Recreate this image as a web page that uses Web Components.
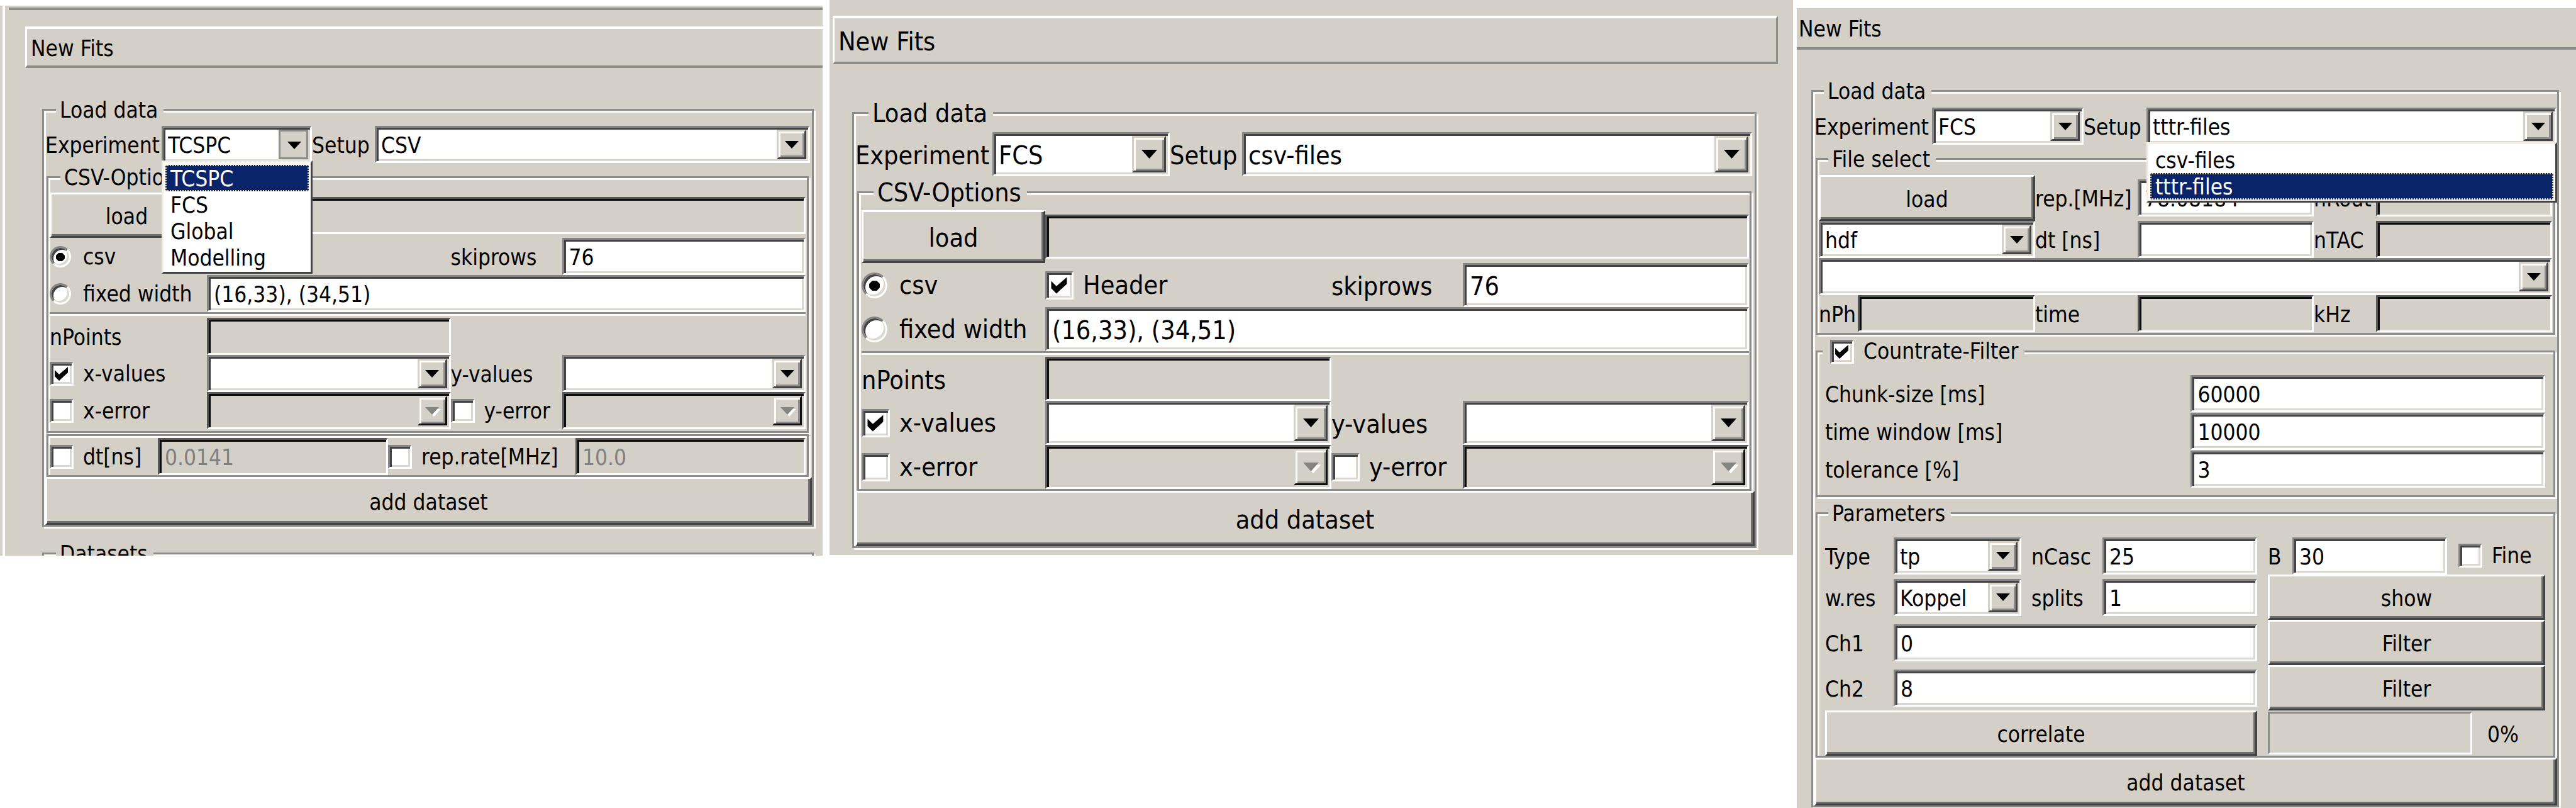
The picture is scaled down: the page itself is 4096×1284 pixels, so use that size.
<!DOCTYPE html>
<html lang="en">
<head>
<meta charset="utf-8">
<title>New Fits</title>
<style>
  body { margin: 0; background: #fff; }
  .desk { display: flex; align-items: flex-start; }
  tcspc-window { flex: 1308 1 0; margin-top: 9px; }
  fcs-csv-window { flex: 1532 1 0; margin-left: 11px; }
  fcs-tttr-window { flex: 1239 1 0; margin: 9px 0 0 6px; }
</style>
</head>
<body>
<main class="desk">
  <tcspc-window></tcspc-window>
  <fcs-csv-window></fcs-csv-window>
  <fcs-tttr-window></fcs-tttr-window>
</main>
<script>
const base = `
  *, *::before, *::after { box-sizing: border-box; }
  input, select, button { font: inherit; color: inherit; margin: 0; border-radius: 0; outline: none; appearance: none; }
  label { white-space: pre; }
  .sunken {
    border: 3px solid; border-color: #858585 #fff #fff #858585; background: #fff;
    box-shadow: inset 3px 3px 0 #434343, inset -3px -3px 0 #dcd8cf;
  }
  .sunken:disabled {
    border-color: #585858 #fff #fff #585858; background: var(--face); color: #808080; opacity: 1;
    box-shadow: inset 3px 3px 0 #0c0c0c, inset -3px -3px 0 var(--face);
  }
`;
function define(name, html, setup) {
  const t = document.createElement('template');
  customElements.define(name, class extends HTMLElement {
    constructor() {
      super();
      t.innerHTML = t.innerHTML || '<style>' + base + '</style>' + html;
      this.attachShadow({ mode: 'open' }).append(t.content.cloneNode(true));
    }
    connectedCallback() { if (setup) setup(this, this.shadowRoot); }
  });
}

define('title-bar', `
  <style>
    :host { display: block; }
    h1 { margin: 0; height: var(--bar-h); padding: 4px 0 0 var(--bar-pad); display: flex; align-items: center;
      font-size: inherit; font-weight: 400; border: 0 solid #fff; border-width: 4px 0 4px 3px; border-bottom-color: #8c8c8a; }
    :host([closed]) h1 { border-right: 3px solid #8c8c8a; }
    :host([cut]) h1 { border-left: 0; }
  </style>
  <h1><slot></slot></h1>`);

define('group-box', `
  <style>
    :host { display: block; }
    fieldset { margin: 0; min-width: 0; padding: 0; border: 3px solid #8c8c8a;
      box-shadow: 3px 3px 0 #fbfaf7, inset 3px 3px 0 #fbfaf7; }
    .body { padding: var(--gp, 0); }
    legend { height: var(--legend-h); line-height: calc(var(--legend-h) + 2px); margin-left: var(--legend-m);
      padding: 0 9px 0 6px; background: var(--face); }
    :host([checkable]) legend { margin-left: 8px; padding-left: 12px; display: flex; align-items: center; }
    :host([plain]) legend { display: none; }
  </style>
  <fieldset><legend><slot name="legend"></slot></legend><div class="body"><slot></slot></div></fieldset>`);

define('push-button', `
  <style>
    :host { display: block; }
    button { display: block; width: 100%; height: 100%; padding: 4px 0 0; background: var(--face); text-align: center;
      border: 3px solid; border-color: #fff #434343 #434343 #fff; box-shadow: inset -3px -3px 0 #6e6e6c; }
  </style>
  <button type="button"><slot></slot></button>`);

define('text-field', `
  <style>
    :host { display: contents; }
    label { align-self: center; padding: 3px 0 0 var(--label-pad, 0); }
    input { width: 100%; min-width: 0; height: var(--field-h); padding: 3px 6px 0 8px; align-self: center; grid-column: var(--col, auto); }
  </style>
  <label for="f"></label><input id="f" type="text" class="sunken">`,
  (el, root) => {
    const label = root.querySelector('label'), input = root.querySelector('input');
    if (el.hasAttribute('label')) label.textContent = el.getAttribute('label');
    else { label.remove(); input.setAttribute('aria-label', el.getAttribute('name') || 'value'); }
    input.value = el.getAttribute('value') || '';
    input.disabled = el.hasAttribute('disabled');
  });

define('combo-field', `
  <style>
    :host { display: contents; }
    label { align-self: center; padding-top: 3px; }
    .combo { display: grid; position: relative; min-width: 0; height: var(--field-h); align-self: center; grid-column: var(--col, auto); }
    select { grid-area: 1 / 1; width: 100%; height: 100%; padding: 3px 60px 0 7px; }
    .drop { grid-area: 1 / 1; justify-self: end; margin: 6px; width: var(--drop-w); display: grid; place-items: center;
      pointer-events: none; background: var(--face); border: 3px solid; border-color: var(--face) #434343 #434343 var(--face);
      box-shadow: inset 3px 3px 0 #fbfaf7, inset -3px -3px 0 #8c8c8a; }
    svg { width: var(--arrow-w); height: var(--arrow-h); overflow: visible; }
    .lit { display: none; fill: #fff; }
    :host([disabled]) .lit { display: block; }
    :host([disabled]) .arrow { fill: #858580; }
    :host([disabled]) .drop { border-color: var(--face) #0c0c0c #0c0c0c var(--face); }
    :host([pressed]) .drop { border-color: #8c8c8a; box-shadow: none; padding: 3px 0 0 3px; }
    ul { display: none; position: absolute; z-index: 5; left: 0; right: -1px; top: calc(100% - 4px); margin: 0;
      padding: 4px 3px 2px; list-style: none; background: #fff; border: 3px solid; border-color: #f3efe6 #434343 #434343 #f3efe6; }
    :host([open]) ul { display: block; }
    li { height: var(--item-h); line-height: calc(var(--item-h) + 2px); padding-left: 8px; }
    li[aria-selected=true] { background: #0a246a; color: #fff; outline: 2px dotted #e8cf86; outline-offset: -2px; }
  </style>
  <label for="s"></label>
  <div class="combo">
    <select id="s" class="sunken"></select>
    <span class="drop"><svg viewBox="0 0 22 12" preserveAspectRatio="none" aria-hidden="true"><path class="lit" d="M3 3h22L14 15z"/><path class="arrow" d="M0 0h22L11 12z"/></svg></span>
    <ul role="listbox"></ul>
  </div>`,
  (el, root) => {
    const label = root.querySelector('label'), select = root.querySelector('select'), list = root.querySelector('ul');
    if (el.hasAttribute('label')) label.textContent = el.getAttribute('label');
    else { label.remove(); select.setAttribute('aria-label', el.getAttribute('name') || 'choice'); }
    const value = el.getAttribute('value') || '';
    (el.getAttribute('options') || value).split('|').forEach(text => {
      const option = new Option(text, text, false, text === value);
      select.add(option);
      if (el.hasAttribute('open')) {
        const li = document.createElement('li');
        li.textContent = text;
        li.setAttribute('role', 'option');
        li.setAttribute('aria-selected', text === value);
        list.append(li);
      }
    });
    if (!el.hasAttribute('open')) list.remove();
    select.disabled = el.hasAttribute('disabled');
  });

const tick = `
  <style>
    :host { display: block; align-self: center; }
    label { display: grid; grid-template-columns: var(--mark-col) auto; justify-content: start; align-items: center; }
    input { grid-area: 1 / 1; width: var(--mark); height: var(--mark); }
    input:not(:checked) + svg { visibility: hidden; }
    svg { grid-area: 1 / 1; width: var(--mark); height: var(--mark); pointer-events: none; }
    .round { width: var(--round); height: var(--round); border-radius: 50%; }
    .round + svg { width: var(--round); height: var(--round); }
  </style>`;
const sync = (el, root) => { root.querySelector('input').checked = el.hasAttribute('checked'); };
define('check-field', tick + `
  <label><input type="checkbox" class="sunken"><svg viewBox="0 0 38 38" aria-hidden="true"><path d="M8 13l7 7L29 8v9L15 30l-7-7z"/></svg><span><slot></slot></span></label>`, sync);
define('radio-field', tick + `
  <label><input type="radio" class="sunken round"><svg viewBox="0 0 34 34" aria-hidden="true"><path d="M14 11h6l4 4v5l-4 4h-6l-4-4v-5z"/></svg><span><slot></slot></span></label>`, sync);

define('work-progress', `
  <style>
    :host { display: flex; align-items: center; }
    .track { flex: 1; height: 68px; border: 3px solid; border-color: #8c8c8a #fff #fff #8c8c8a; }
    output { width: 116px; padding: 4px 0 0 24px; }
  </style>
  <div class="track" role="progressbar" aria-valuenow="0" aria-label="progress"></div><output><slot></slot></output>`);

const windowStyle = `
  <style>
    :host { display: block; min-width: 0; color: #000; background: #d4d0c8; --face: #d4d0c8;
      font: 35px "DejaVu Sans Condensed", "DejaVu Sans", sans-serif; font-stretch: condensed;
      --field-h: 59px; --legend-h: 41px; --legend-m: 19px; --bar-h: 66px; --bar-pad: 6px;
      --drop-w: 47px; --arrow-w: 22px; --arrow-h: 12px; --item-h: 42px;
      --mark: 38px; --mark-col: 53px; --round: 34px; }
    .grid { display: grid; align-items: center; }
    .line { height: 6px; background: linear-gradient(#8c8c8a 50%, #fbfaf7 50%); }
  </style>`;

const csvRows = (header) => `
  <div class="grid opts">
    <radio-field checked>csv</radio-field>
    ${header}
    <text-field label="skiprows" value="76"></text-field>
    <radio-field>fixed width</radio-field>
    <text-field name="fixed width columns" value="(16,33), (34,51)" style="--col: 2 / -1"></text-field>
  </div>
  <div class="line"></div>
  <div class="grid opts">
    <text-field label="nPoints" disabled></text-field><span></span><span></span>
    <check-field checked>x-values</check-field>
    <combo-field name="x-values"></combo-field>
    <combo-field label="y-values"></combo-field>
    <check-field>x-error</check-field>
    <combo-field name="x-error" disabled></combo-field>
    <check-field>y-error</check-field>
    <combo-field name="y-error" disabled></combo-field>
  </div>`;

define('tcspc-window', windowStyle + `
  <style>
    .frame { margin-left: 4px; border-left: 4px solid #fff; padding-top: 3px; }
    .edge { height: 4px; margin-left: 6px; background: #8c8c8a; }
    title-bar { margin: 26px 0 0 32px; }
    .main { margin: 46px 14px 0 59px; --gp: 5px 0 0 2px; }
    .source { grid-template-columns: 185px 239px 100px 1fr; margin-right: 3px; }
    .inner { margin: 2px 5px 0 2px; --gp: 4px 2px 3px 2px; }
    .rates { --gp: 3px 2px 0 2px; }
    .rates .grid { grid-template-columns: 172px 1fr 298px 1fr; }
    .load { display: grid; grid-template-columns: 245px 1fr; height: 72px; }
    .load push-button { height: 72px; }
    .opts { grid-template-columns: 250px 1fr 177px 1fr; }
    .line { margin-bottom: 3px; }
    .add { height: 76px; }
    .next { margin: 22px 11px 0 59px; padding-right: 3px; height: 24px; overflow: hidden; --gp: 40px 0 0; }
  </style>
  <div class="frame">
    <div class="edge"></div>
    <title-bar>New Fits</title-bar>
    <group-box class="main"><span slot="legend">Load data</span>
      <div class="grid source">
        <combo-field label="Experiment" value="TCSPC" options="TCSPC|FCS|Global|Modelling" open pressed></combo-field>
        <combo-field label="Setup" value="CSV"></combo-field>
      </div>
      <group-box class="inner"><span slot="legend">CSV-Options</span>
        <div class="load"><push-button>load</push-button><text-field name="file" disabled></text-field></div>
        ${csvRows('<span></span>')}
      </group-box>
      <group-box class="inner rates" plain>
        <div class="grid">
          <check-field>dt[ns]</check-field><text-field name="dt" value="0.0141" disabled></text-field>
          <check-field>rep.rate[MHz]</check-field><text-field name="rep.rate" value="10.0" disabled></text-field>
        </div>
      </group-box>
      <push-button class="add">add dataset</push-button>
    </group-box>
    <div class="next"><group-box><span slot="legend">Datasets</span></group-box></div>
  </div>`);

define('fcs-csv-window', windowStyle + `
  <style>
    :host { font-size: 41px; padding: 25px 0 11px;
      --field-h: 70px; --legend-h: 48px; --legend-m: 23px; --bar-h: 77px; --bar-pad: 6px;
      --drop-w: 54px; --arrow-w: 25px; --arrow-h: 14px; --mark: 45px; --mark-col: 60px; --round: 41px; }
    title-bar { margin: 0 24px 0 5px; }
    .main { margin: 53px 58px 0 36px; --gp: 7px 0 0 2px; }
    .source { grid-template-columns: 218px 282px 115px 1fr; margin-right: 4px; }
    .inner { margin: 1px 5px 0 3px; --gp: 5px 1px 0 4px; }
    .load { display: grid; grid-template-columns: 292px 1fr; height: 84px; }
    .load push-button { height: 84px; }
    .opts { grid-template-columns: 292px 1fr 209px 1fr; }
    .line { margin-bottom: 3px; }
    .add { height: 88px; }
  </style>
  <title-bar closed>New Fits</title-bar>
  <group-box class="main"><span slot="legend">Load data</span>
    <div class="grid source">
      <combo-field label="Experiment" value="FCS"></combo-field>
      <combo-field label="Setup" value="csv-files"></combo-field>
    </div>
    <group-box class="inner"><span slot="legend">CSV-Options</span>
      <div class="load"><push-button>load</push-button><text-field name="file" disabled></text-field></div>
      ${csvRows('<check-field checked>Header</check-field>')}
    </group-box>
    <push-button class="add">add dataset</push-button>
  </group-box>`);

define('fcs-tttr-window', windowStyle + `
  <style>
    :host { --legend-m: 17px; --bar-h: 70px; --bar-pad: 3px; padding-bottom: 2px; }
    .main { margin: 45px 27px 0 23px; --gp: 6px 0 0 2px; }
    .source { grid-template-columns: 187px 241px 100px 1fr; margin-right: 1px; }
    .inner { margin: 2px 3px 0 2px; --gp: 5px 2px 1px; }
    .files { grid-template-columns: 344px 163px 1fr 99px 1fr; }
    .files push-button { height: 73px; }
    .photons { display: grid; grid-template-columns: 62px 1fr; }
    .filter { margin-top: 6px; --gp: 17px 13px 12px 12px; }
    .filter .grid { grid-template-columns: minmax(0, 582fr) minmax(0, 564fr); row-gap: 1px; }
    .params { margin-top: 5px; --gp: 17px 13px 0 12px; }
    .params .grid { grid-template-columns: 109px 203px 129px 1fr 17px 39px 1fr 156px; grid-template-rows: 60px repeat(4, 72px); }
    .second { --label-pad: 16px; }
    .side { grid-column: 6 / span 3; height: 100%; }
    .fine { padding-left: 18px; }
    .wide { grid-column: 1 / span 4; height: 100%; }
    .add { height: 76px; }
  </style>
  <title-bar cut>New Fits</title-bar>
  <group-box class="main"><span slot="legend">Load data</span>
    <div class="grid source">
      <combo-field label="Experiment" value="FCS"></combo-field>
      <combo-field label="Setup" value="tttr-files" options="csv-files|tttr-files" open></combo-field>
    </div>
    <group-box class="inner"><span slot="legend">File select</span>
      <div class="grid files">
        <push-button>load</push-button>
        <text-field label="rep.[MHz]" value="78.08184"></text-field>
        <text-field label="nRout" disabled></text-field>
        <combo-field name="file type" value="hdf"></combo-field>
        <text-field label="dt [ns]"></text-field>
        <text-field label="nTAC" disabled></text-field>
        <combo-field name="file" style="--col: 1 / -1"></combo-field>
        <div class="photons"><text-field label="nPh" disabled></text-field></div>
        <text-field label="time" disabled></text-field>
        <text-field label="kHz" disabled></text-field>
      </div>
    </group-box>
    <group-box class="inner filter" checkable><check-field slot="legend" checked>Countrate-Filter</check-field>
      <div class="grid">
        <text-field label="Chunk-size [ms]" value="60000"></text-field>
        <text-field label="time window [ms]" value="10000"></text-field>
        <text-field label="tolerance [%]" value="3"></text-field>
      </div>
    </group-box>
    <group-box class="inner params"><span slot="legend">Parameters</span>
      <div class="grid">
        <combo-field label="Type" value="tp"></combo-field>
        <text-field class="second" label="nCasc" value="25"></text-field><span></span>
        <text-field label="B" value="30"></text-field>
        <check-field class="fine">Fine</check-field>
        <combo-field label="w.res" value="Koppel"></combo-field>
        <text-field class="second" label="splits" value="1"></text-field>
        <push-button class="side">show</push-button>
        <text-field label="Ch1" value="0" style="--col: 2 / span 3"></text-field>
        <push-button class="side">Filter</push-button>
        <text-field label="Ch2" value="8" style="--col: 2 / span 3"></text-field>
        <push-button class="side">Filter</push-button>
        <push-button class="wide">correlate</push-button>
        <work-progress class="side">0%</work-progress>
      </div>
    </group-box>
    <push-button class="add">add dataset</push-button>
  </group-box>`);
</script>
</body>
</html>
